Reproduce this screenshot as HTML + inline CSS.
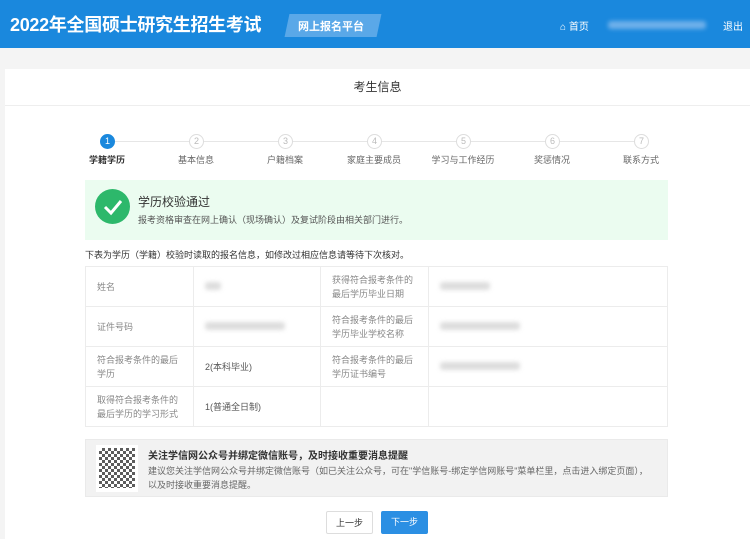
<!DOCTYPE html>
<html><head><meta charset="utf-8"><style>
*{margin:0;padding:0;box-sizing:border-box}
body{width:750px;height:539px;overflow:hidden;background:#f4f4f4;font-family:"Liberation Sans","Noto Sans CJK SC",sans-serif;position:relative;color:#333}
.hd{position:absolute;left:0;top:0;width:750px;height:48px;background:#1a88dd;color:#fff}
.ttl{position:absolute;left:10px;top:11px;font-size:18px;font-weight:bold;letter-spacing:-0.3px}
.tag{position:absolute;left:287px;top:14px;width:92px;height:23px;background:#5aa8e8;transform:skewX(-12deg)}
.tagt{position:absolute;left:298px;top:18px;font-size:11px;font-weight:bold}
.nav{position:absolute;top:18px;font-size:10px}
.card{position:absolute;left:5px;top:69px;width:745px;height:470px;background:#fff}
.ct{position:absolute;left:0;top:0;width:745px;height:37px;border-bottom:1px solid #eee;text-align:center;line-height:37px;font-size:12px}
.line{position:absolute;top:141px;height:1px;background:#e6e6e6}
.c{position:absolute;top:134px;width:15px;height:15px;border-radius:50%;border:1px solid #ddd;background:#fff;color:#bbb;font-size:9px;text-align:center;line-height:13px}
.c.a{background:#1a88dd;border-color:#1a88dd;color:#fff}
.sl{position:absolute;top:153px;font-size:9px;color:#666;width:80px;text-align:center}
.ok{position:absolute;left:85px;top:180px;width:583px;height:60px;background:#ebfcf0}
table{position:absolute;left:85px;top:266px;width:583px;border-collapse:collapse;font-size:9px;color:#888}
td{border:1px solid #ececec;height:40px;padding:0 11px;line-height:14px}
.blur{display:inline-block;height:8px;background:#ddd;filter:blur(2px);border-radius:3px}
.wx{position:absolute;left:85px;top:439px;width:583px;height:58px;background:#f2f2f2;border:1px solid #eaeaea}
.btn{position:absolute;top:511px;width:47px;height:23px;font-size:9px;text-align:center;line-height:23px;border-radius:2px}
</style></head><body>
<div class="hd">
<div class="ttl">2022年全国硕士研究生招生考试</div>
<div class="tag"></div><div class="tagt">网上报名平台</div>
<div class="nav" style="left:560px">⌂ 首页</div>
<div class="blur" style="position:absolute;left:608px;top:21px;width:98px;background:#6fb0ea"></div>
<div class="nav" style="left:723px">退出</div>
</div>
<div class="card">
<div class="ct">考生信息</div>
</div>
<div class="line" style="left:115px;width:520px"></div>
<div class="c a" style="left:100px">1</div><div class="c" style="left:189px">2</div><div class="c" style="left:278px">3</div><div class="c" style="left:367px">4</div><div class="c" style="left:456px">5</div><div class="c" style="left:545px">6</div><div class="c" style="left:634px">7</div>
<div class="sl" style="left:67px;color:#333;font-weight:bold">学籍学历</div><div class="sl" style="left:156px">基本信息</div><div class="sl" style="left:245px">户籍档案</div><div class="sl" style="left:334px">家庭主要成员</div><div class="sl" style="left:423px">学习与工作经历</div><div class="sl" style="left:512px">奖惩情况</div><div class="sl" style="left:601px">联系方式</div>
<div class="ok">
<div style="position:absolute;left:10px;top:9px;width:35px;height:35px;border-radius:50%;background:#2db86b"><svg width="35" height="35"><path d="M10 18 L16 24 L26 12" stroke="#fff" stroke-width="3" fill="none"/></svg></div>
<div style="position:absolute;left:53px;top:13px;font-size:12px">学历校验通过</div>
<div style="position:absolute;left:53px;top:33px;font-size:9px;color:#555">报考资格审查在网上确认（现场确认）及复试阶段由相关部门进行。</div>
</div>
<div style="position:absolute;left:85px;top:248px;font-size:9px">下表为学历（学籍）校验时读取的报名信息，如修改过相应信息请等待下次核对。</div>
<table>
<tr><td style="width:108px">姓名</td><td style="width:127px"><span class="blur" style="width:16px"></span></td><td style="width:108px">获得符合报考条件的<br>最后学历毕业日期</td><td><span class="blur" style="width:50px"></span></td></tr>
<tr><td>证件号码</td><td><span class="blur" style="width:80px"></span></td><td>符合报考条件的最后<br>学历毕业学校名称</td><td><span class="blur" style="width:80px"></span></td></tr>
<tr><td>符合报考条件的最后<br>学历</td><td style="color:#555">2(本科毕业)</td><td>符合报考条件的最后<br>学历证书编号</td><td><span class="blur" style="width:80px"></span></td></tr>
<tr><td>取得符合报考条件的<br>最后学历的学习形式</td><td style="color:#555">1(普通全日制)</td><td></td><td></td></tr>
</table>
<div class="wx">
<div style="position:absolute;left:10px;top:5px;width:42px;height:47px;background:#fff;padding:3px"><div style="width:36px;height:40px;background:repeating-conic-gradient(#333 0 25%,#fff 0 50%) 0 0/6px 6px;opacity:.8"></div></div>
<div style="position:absolute;left:62px;top:7px;font-size:10px;font-weight:bold">关注学信网公众号并绑定微信账号，及时接收重要消息提醒</div>
<div style="position:absolute;left:62px;top:24px;font-size:9px;color:#666;line-height:14px;width:520px">建议您关注学信网公众号并绑定微信账号（如已关注公众号，可在"学信账号-绑定学信网账号"菜单栏里，点击进入绑定页面），<br>以及时接收重要消息提醒。</div>
</div>
<div class="btn" style="left:326px;border:1px solid #ddd;background:#fff">上一步</div>
<div class="btn" style="left:381px;background:#2b8fe3;color:#fff">下一步</div>
</body></html>
